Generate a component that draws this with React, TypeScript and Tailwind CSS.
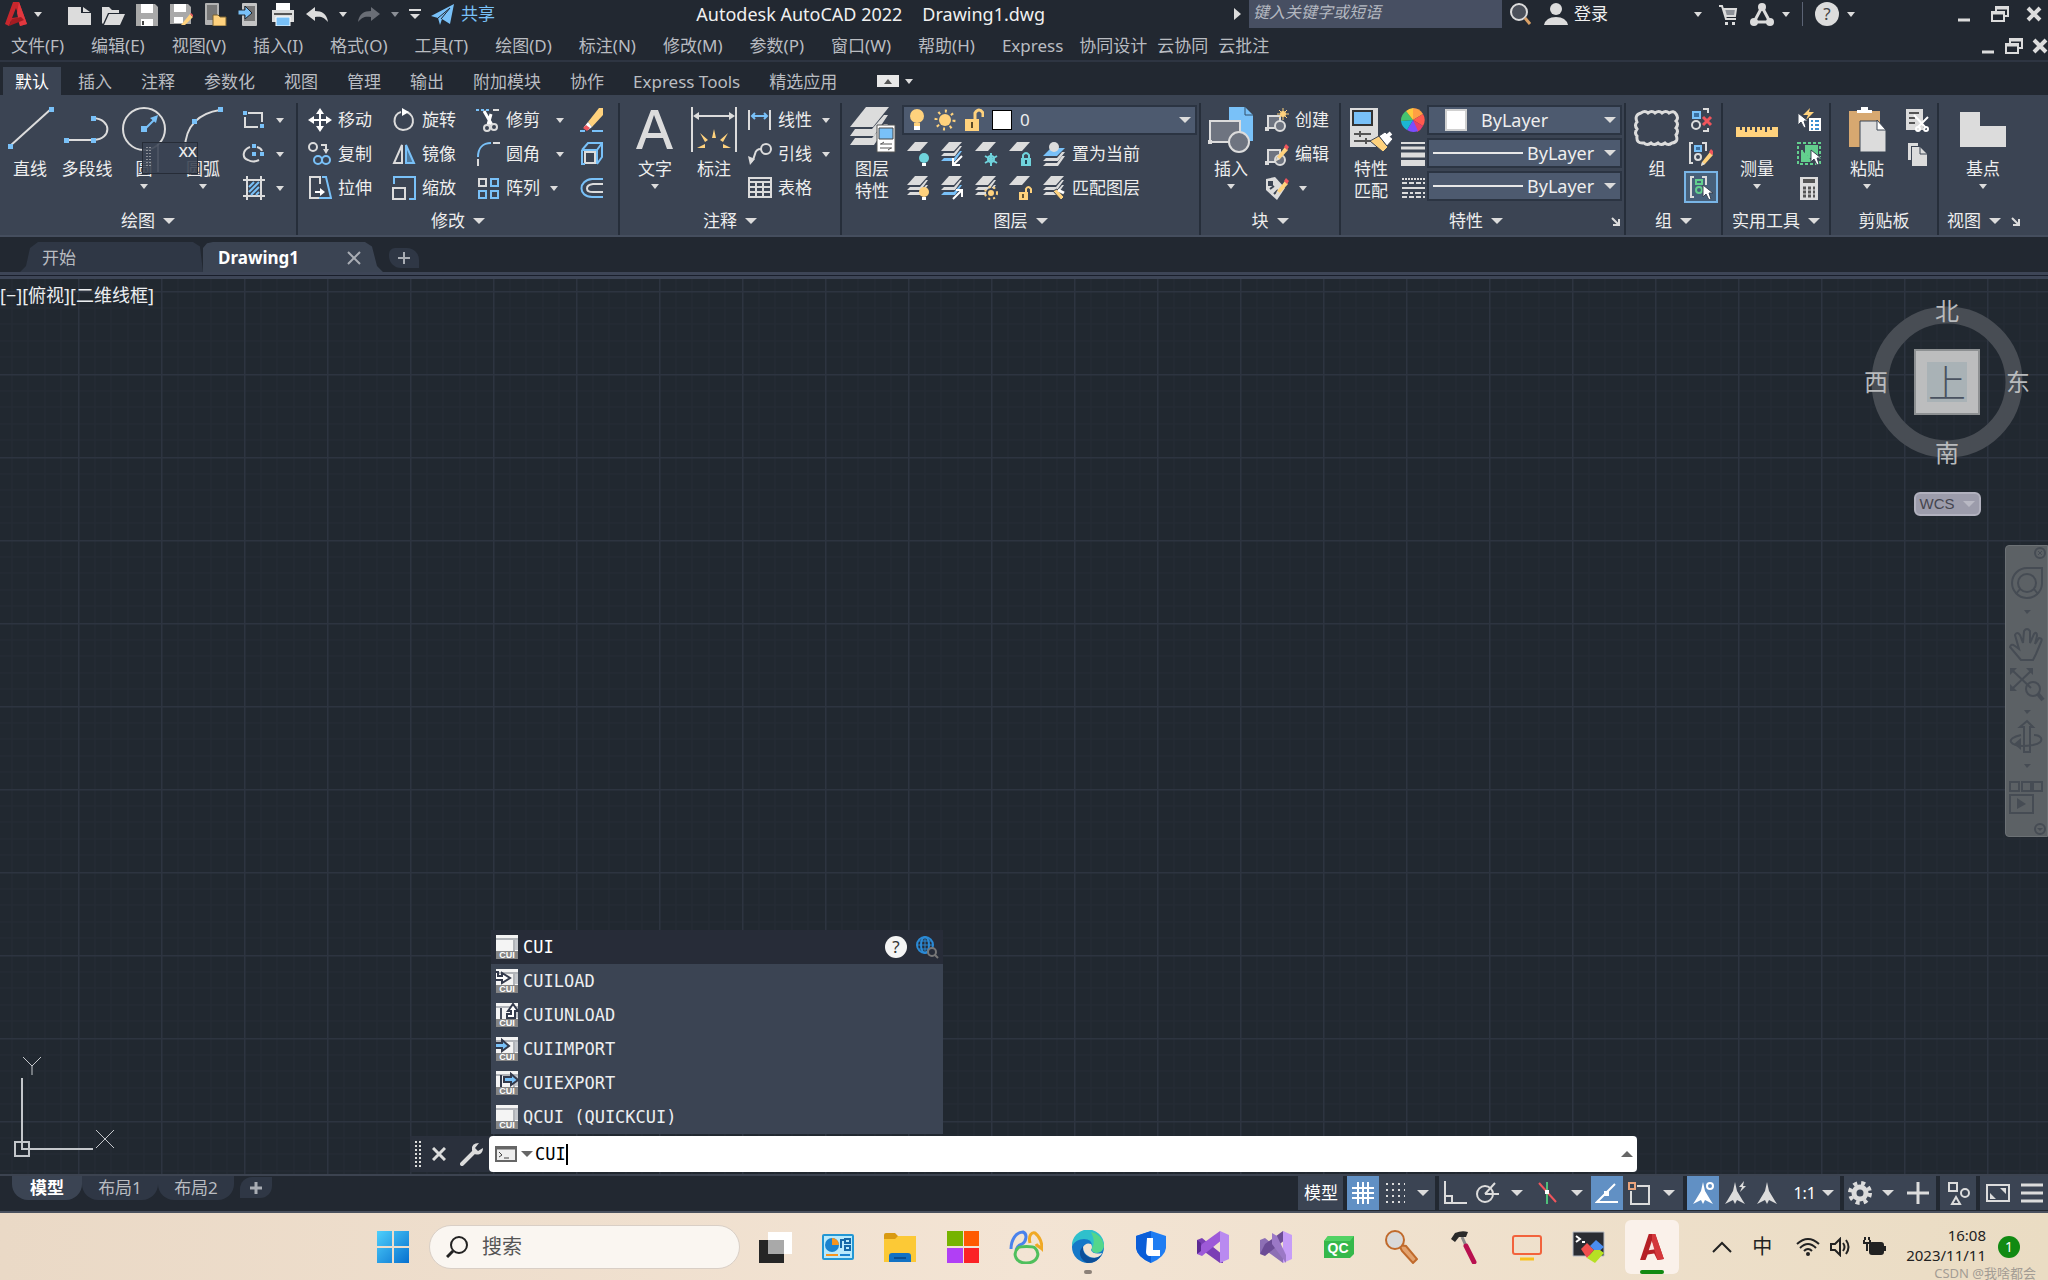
import type { ReactNode } from "react";

const L = "#dcdcdc";
const B = "#79c1f8";
const Y = "#ffd27d";
const C = "#6fd3dc";
const G = "#63cf8e";
const R = "#f0555c";
const P = "#3b4453";

function Svg({ w = 24, h = 24, children }: { w?: number; h?: number; children: ReactNode }) {
  return (
    <svg
      className="shrink-0"
      width={w}
      height={h}
      viewBox={`0 0 ${w} ${h}`}
      fill="none"
      stroke={L}
      strokeWidth={2}
      aria-hidden="true"
    >
      {children}
    </svg>
  );
}

function Caret({ big = false, up = false, color = L }: { big?: boolean; up?: boolean; color?: string }) {
  const w = big ? 12 : 8;
  const h = big ? 6 : 5;
  return (
    <Svg w={w} h={h}>
      <path d={up ? `M0 ${h}H${w}L${w / 2} 0z` : `M0 0H${w}L${w / 2} ${h}z`} fill={color} stroke="none" />
    </Svg>
  );
}

/* shared icon fragments */

function Pencil() {
  return (
    <g stroke="none">
      <path d="M12 15L20 5L23 8L15 17L11 19z" fill={Y} />
      <path d="M19 5L21 2L24 5L22 8z" fill={R} />
      <path d="M11 19L12 15L15 17z" fill={L} />
    </g>
  );
}

function Sheets({ count = 3, blueAt = -1 }: { count?: number; blueAt?: number }) {
  return (
    <g stroke="none">
      {count > 2 && <path d="M1 19L4 16H14L20 9H22L15 19z" fill={blueAt === 2 ? B : L} />}
      {count > 1 && <path d="M1 14L4 11H14L20 4H22L15 14z" fill={blueAt === 1 ? B : L} />}
      <path d="M1 9H14L22 0H9z" fill={L} />
    </g>
  );
}

function Cursor({ x = 11, y = 9 }: { x?: number; y?: number }) {
  return (
    <path
      d={`M${x} ${y}V${y + 12}L${x + 3} ${y + 9}L${x + 6} ${y + 15}L${x + 8} ${y + 14}L${x + 6} ${y + 8}H${x + 10}z`}
      fill="#fff"
      stroke={P}
      strokeWidth={1}
    />
  );
}

function AutocadLogo({ w = 24, h = 26 }: { w?: number; h?: number }) {
  return (
    <svg width={w} height={h} viewBox="0 0 24 26" aria-hidden="true">
      <path d="M9 1H15L23 23L16 25L14 19L7 20L5 25L1 23z" fill="#c8272d" />
      <path d="M12 7L15 16L8 17z" fill="#222831" />
      <path d="M15 1L23 23L16 25L13 12z" fill="#e2383f" />
      <path d="M5 25L8 18L17 16L20 19z" fill="#a41c22" />
    </svg>
  );
}

/* title bar icons */

const iconNew = (
  <Svg>
    <path d="M1 5H14V11H24V23H1z" fill={L} stroke="none" />
    <path d="M16 5L23 10H16z" fill={L} stroke="none" />
  </Svg>
);
const iconOpen = (
  <Svg>
    <path d="M1 21V5H8L11 8H18V11H7L2 22z" fill={L} stroke="none" />
    <path d="M8 12H24L19 23H3z" fill={L} stroke="none" />
  </Svg>
);
const iconSave = (
  <Svg>
    <path d="M1 2H20L23 5V25H1z" fill="#a9a9a9" stroke="none" />
    <path d="M6 2H18V11H6zM6 17H18V24H6z" fill="#fff" stroke="none" />
    <path d="M8 19V23" stroke="#444" />
  </Svg>
);
const iconSaveAs = (
  <Svg>
    <path d="M1 2H19L22 5V22H1z" fill="#a9a9a9" stroke="none" />
    <path d="M5 2H17V10H5zM5 15H14V21H5z" fill="#fff" stroke="none" />
    <path d="M12 23L21 12L24 15L16 23z" fill={Y} stroke="none" />
    <path d="M21 12L22 11L24 13V15z" fill={R} stroke="none" />
  </Svg>
);
const iconWebOpen = (
  <Svg>
    <rect x="2" y="1" width="14" height="22" rx="1" fill="#b3b3b3" stroke="none" />
    <rect x="4" y="3" width="10" height="15" fill="#777" stroke="none" />
    <path d="M10 23V13H15L17 15H23V24H10z" fill={Y} stroke="#7a6232" strokeWidth={1} />
  </Svg>
);
const iconWebSave = (
  <Svg>
    <rect x="5" y="1" width="15" height="23" rx="1" fill="#c4c4c4" stroke="none" />
    <rect x="7" y="4" width="11" height="15" fill="#777" stroke="none" />
    <path d="M1 8H8V4L15 11L8 17V13H1z" fill={B} stroke="#222831" strokeWidth={1} />
  </Svg>
);
const iconPrint = (
  <Svg>
    <path d="M5 1H19V8H5z" fill="#fff" stroke="none" />
    <path d="M1 8H23V20H1z" fill={L} stroke="none" />
    <path d="M3 12H21" stroke="#555" />
    <path d="M5 15H19V24H5z" fill={B} stroke="#fff" strokeWidth={1} />
  </Svg>
);
const iconUndo = (
  <Svg>
    <path d="M1 12L10 5V9C17 9 22 12 23 20C19 15 16 14 10 15V19z" fill={L} stroke="none" />
  </Svg>
);
const iconRedo = (
  <Svg>
    <path d="M23 12L14 5V9C7 9 2 12 1 20C5 15 8 14 14 15V19z" fill="#6a6e76" stroke="none" />
  </Svg>
);
const iconPlane = (
  <Svg>
    <path d="M0 14L23 2L19 22L11 17L9 23L7 16z" fill={B} stroke="none" />
    <path d="M7 16L19 6L10 17" stroke="#222831" strokeWidth={1} />
  </Svg>
);
const iconRestore = (
  <Svg w={20} h={20}>
    <path d="M6 7V3H18V12H14" />
    <path d="M6 4H18" strokeWidth={3} />
    <rect x="2" y="8" width="12" height="9" />
    <path d="M2 9H14" strokeWidth={3} />
  </Svg>
);
const iconClose = (
  <Svg w={16} h={16}>
    <path d="M2 2L14 14M14 2L2 14" strokeWidth={4} />
  </Svg>
);
const iconMin = (
  <Svg w={12} h={20}>
    <path d="M0 16H12" strokeWidth={3} />
  </Svg>
);

/* ribbon, large icons */

const bigLine = (
  <Svg w={50} h={46}>
    <path d="M5 41L46 4" />
    <path d="M3 39h5v5h-5zM44 2h5v5h-5z" fill={B} stroke="none" />
  </Svg>
);
const bigPolyline = (
  <Svg w={48} h={46}>
    <path d="M4 35H30M30 13C49 14 49 34 31 35" />
    <path d="M1 33h5v5h-5zM28 33h5v5h-5zM28 11h5v5h-5z" fill={B} stroke="none" />
  </Svg>
);
const bigCircle = (
  <Svg w={46} h={46}>
    <circle cx="23" cy="24" r="21" />
    <path d="M24 24L34 14" stroke={B} />
    <path d="M37 10L35 18L29 13zM20 21h6v6h-6z" fill={B} stroke="none" />
  </Svg>
);
const bigArc = (
  <Svg w={46} h={46}>
    <path d="M5 44C5 20 20 8 40 5" />
    <path d="M38 2h5v5h-5zM12 14h5v5h-5z" fill={B} stroke="none" />
  </Svg>
);
const bigText = (
  <Svg w={40} h={46}>
    <path d="M1 44L16 5H23L38 44H32L28 33H11L7 44zM13 28H26L19 10z" fill={L} stroke="none" />
  </Svg>
);
const bigDim = (
  <Svg w={48} h={48}>
    <path d="M2 2V47M46 2V47M6 11H42" />
    <path d="M3 11L9 7V15zM45 11L39 7V15z" fill={L} stroke="none" />
    <path
      d="M24 24L26 33H22zM10 28L18 35L15 37zM38 28L30 35L33 37zM7 43L15 39V43zM41 43L33 39V43z"
      fill={Y}
      stroke="none"
    />
  </Svg>
);
const bigLayers = (
  <Svg w={48} h={48}>
    <g fill={L} stroke="none">
      <path d="M2 40L7 33H24L36 19H40L26 40z" />
      <path d="M2 31L7 24H24L36 10H40L26 31z" />
      <path d="M2 22H25L41 2H18z" />
    </g>
    <path d="M29 20H47V47H29z" fill="#fff" stroke="#555" strokeWidth={1} />
    <path d="M31 23H45V34H31z" fill={B} stroke="#444" strokeWidth={1} />
    <path d="M32 39H44M32 43H44M36 37L33 39M40 45L43 43" stroke="#555" strokeWidth={1} />
  </Svg>
);
const bigInsert = (
  <Svg w={48} h={48}>
    <path d="M22 2H38L46 10V36H22z" fill={B} stroke="none" />
    <path d="M38 2V10H46" stroke="#35506b" strokeWidth={1} />
    <path d="M3 16H33V37H3z" fill="#6e7480" stroke={L} />
    <circle cx="32" cy="37" r="10" fill="#6e7480" stroke={L} />
    <path d="M1 35h4v4h-4z" fill={L} stroke="none" />
  </Svg>
);
const bigMatch = (
  <Svg w={48} h={48}>
    <path d="M3 3H31V42H3z" fill={L} stroke="none" />
    <path d="M6 6H25V20H6z" fill={B} stroke="#333" />
    <path d="M7 29H24M7 36H24M13 26V32M19 33V39" stroke="#555" />
    <path d="M23 36L32 31L41 42L36 47z" fill={Y} stroke={P} strokeWidth={1} />
    <path d="M32 31L38 27L46 34L40 41z" fill="#fff" stroke={P} strokeWidth={1} />
    <path d="M38 33L44 28" stroke="#fff" strokeWidth={4} />
  </Svg>
);
const bigGroup = (
  <Svg w={48} h={46}>
    <path
      d="M8 8Q12 5 15 8Q19 5 22 8Q26 5 29 8Q33 5 36 8Q41 5 43 9Q46 13 43 16Q46 19 43 23Q46 26 43 30Q46 37 39 38Q35 41 32 38Q28 41 25 38Q21 41 18 38Q14 41 11 38Q3 39 4 31Q1 28 4 24Q1 20 4 17Q1 10 8 8z"
      strokeWidth={3}
    />
  </Svg>
);
const bigRuler = (
  <Svg w={44} h={46}>
    <path d="M1 22H43V32H1z" fill={Y} stroke="none" />
    <path d="M6 22V25M11 22V27M16 22V25M21 22V27M26 22V25M31 22V27M36 22V25" stroke={P} />
  </Svg>
);
const bigPaste = (
  <Svg w={40} h={48}>
    <path d="M2 6H33V42H2z" fill="#d7a870" stroke="none" />
    <path d="M10 8V5H14V2H21V5H25V8z" fill="#fff" stroke="none" />
    <path d="M13 16H30L39 25V47H13z" fill={L} stroke={P} strokeWidth={1} />
    <path d="M30 15V25H39z" fill="#fff" stroke={P} strokeWidth={1} />
  </Svg>
);
const bigBase = (
  <Svg w={48} h={46}>
    <path d="M1 7H21V21H47V42H1z" fill={L} stroke="none" />
  </Svg>
);

/* ribbon, small icons */

const smRect = (
  <Svg>
    <path d="M6 5H20V14M3 9V19H16" />
    <path d="M1 3h4v4h-4zM18 16h4v4h-4z" fill={B} stroke="none" />
  </Svg>
);
const smEllipse = (
  <Svg>
    <path d="M8 5C0 8 0 16 6 18Q11 21 17 18M15 5Q19 6 20 9" />
    <path d="M10 2h4v4h-4zM10 10h4v4h-4zM18 10h4v4h-4z" fill={B} stroke="none" />
  </Svg>
);
const smHatch = (
  <Svg>
    <path d="M5 0V24M19 0V24M1 4H23M1 20H23" />
    <path d="M7 11L12 6M7 16L17 6M9 19L17 11M14 19L17 16" stroke={B} />
  </Svg>
);
const smMove = (
  <Svg>
    <path d="M12 4V20M4 12H20" stroke="#fff" />
    <path d="M12 0L16 6H8zM12 24L16 18H8zM0 12L6 8V16zM24 12L18 8V16z" fill="#fff" stroke="none" />
  </Svg>
);
const smCopy = (
  <Svg>
    <circle cx="5" cy="5" r="4" />
    <path d="M13 3H18V8" />
    <path d="M15 7H21L18 12z" fill={L} stroke="none" />
    <circle cx="10" cy="18" r="4" stroke={B} />
    <circle cx="18" cy="18" r="4" stroke={B} />
  </Svg>
);
const smStretch = (
  <Svg>
    <path d="M12 8V1H2V22H11" />
    <path d="M14 1H18L23 22H11" stroke={B} />
    <path d="M7 16H13" stroke="#fff" />
    <path d="M12 12L17 16L12 20z" fill="#fff" stroke="none" />
  </Svg>
);
const smRotate = (
  <Svg>
    <path d="M15 4C24 8 23 22 11 22C0 21 0 6 9 4" />
    <path d="M10 0L17 4L10 8z" fill="#fff" stroke="none" />
  </Svg>
);
const smMirror = (
  <Svg>
    <path d="M10 3V21H2z" />
    <path d="M14 3V21H22z" stroke={B} fill="#4e7ba0" />
  </Svg>
);
const smScale = (
  <Svg>
    <path d="M2 8V1H23V23H17" stroke={B} />
    <path d="M1 12H13V23H1z" />
  </Svg>
);
const smTrim = (
  <Svg>
    <path d="M0 2H15" stroke={B} strokeDasharray="3 2" />
    <path d="M8 3L16 17M15 6L12 17" stroke="#fff" strokeWidth={3} />
    <circle cx="11" cy="20" r="3" />
    <circle cx="18" cy="19" r="3" />
    <path d="M17 2H23" />
  </Svg>
);
const smFillet = (
  <Svg>
    <path d="M2 15C2 6 7 1 15 1" stroke={B} />
    <path d="M2 17V24M17 1H24" />
  </Svg>
);
const smArray = (
  <Svg>
    <path d="M3 3h7v7h-7z" />
    <path d="M15 3h7v7h-7zM3 15h7v7h-7zM15 15h7v7h-7z" stroke={B} />
  </Svg>
);
const smErase = (
  <Svg>
    <path d="M8 14L19 0H23V7L12 19z" fill={Y} stroke="none" />
    <path d="M8 14L12 19L8 22L4 19z" fill="#fff" stroke="none" />
    <path d="M6 17L10 20L7 23L3 20z" fill={R} stroke="none" />
    <path d="M0 23H5M12 23H23" stroke={B} />
  </Svg>
);
const smExplode = (
  <Svg>
    <path d="M5 10H15V21H5z" />
    <path d="M2 8L8 1H22V15L17 22M2 8H17V22M17 8L22 1M2 8V22H5" stroke={B} />
  </Svg>
);
const smOffset = (
  <Svg>
    <path d="M23 3H12C-2 4 -2 21 12 21H23" stroke={B} />
    <path d="M23 8H13C5 9 5 16 13 16H23" />
  </Svg>
);
const smLinear = (
  <Svg>
    <path d="M1 2V22M22 2V22" />
    <path d="M4 8H19M7 5L4 8L7 11M16 5L19 8L16 11" stroke={B} />
  </Svg>
);
const smLeader = (
  <Svg>
    <circle cx="18" cy="7" r="5" />
    <path d="M13 7Q8 7 7 12T3 20" />
    <path d="M0 14L7 17L2 23z" fill={L} stroke="none" />
  </Svg>
);
const smTable = (
  <Svg>
    <path d="M1 2H23V21H1z" />
    <path d="M1 6H23M1 11H23M1 16H23M8 6V21M15 6V21" />
  </Svg>
);
const bulb = (color: string) => (
  <g stroke="none">
    <circle cx="18" cy="16" r="5" fill={color} />
    <path d="M16 21H20V24H16z" fill="#fff" />
  </g>
);
const smLayOff = (
  <Svg>
    <Sheets count={1} />
    {bulb(C)}
  </Svg>
);
const smLayOn = (
  <Svg>
    <Sheets />
    {bulb(Y)}
  </Svg>
);
const smLayIso = (
  <Svg>
    <Sheets blueAt={2} />
    <path d="M22 14L14 22M13 16V23H20" stroke="#fff" />
  </Svg>
);
const smLayUniso = (
  <Svg>
    <Sheets blueAt={2} />
    <path d="M13 23L22 14M16 14H22V21" stroke="#fff" />
  </Svg>
);
const smLayFreeze = (
  <Svg>
    <Sheets count={1} />
    <path d="M17 11V24M11 14L23 21M23 14L11 21" stroke={C} />
    <circle cx="17" cy="17" r="3" stroke={C} />
  </Svg>
);
const smLayThaw = (
  <Svg>
    <Sheets />
    <circle cx="17" cy="17" r="4" fill={Y} stroke={P} />
    <circle cx="17" cy="17" r="6" stroke={Y} strokeDasharray="2 3" />
  </Svg>
);
const smLayLock = (
  <Svg>
    <Sheets count={1} />
    <path d="M13 16H23V24H13z" fill={C} stroke="none" />
    <path d="M15 16V13Q18 9 21 13V16" stroke={C} />
    <path d="M18 18V22" stroke="#245" />
  </Svg>
);
const smLayUnlock = (
  <Svg>
    <Sheets count={1} />
    <path d="M11 16H20V24H11z" fill={Y} stroke="none" />
    <path d="M18 16V13Q20 9 23 13V17" stroke={Y} />
    <path d="M15 18V22" stroke="#653" />
  </Svg>
);
const smLayCurrent = (
  <Svg>
    <g stroke="none">
      <path d="M1 24L4 21H15L20 14H23L16 24z" fill={L} />
      <path d="M1 19L4 16H15L20 10H23L16 19z" fill={L} />
      <path d="M1 14H15L23 6H9z" fill={B} />
      <circle cx="12" cy="5" r="5" fill={L} />
    </g>
  </Svg>
);
const smLayMatch = (
  <Svg>
    <Sheets />
    <path d="M11 15L15 13L22 21L19 24z" fill={Y} stroke={P} strokeWidth={1} />
    <path d="M16 14L22 17" stroke="#fff" strokeWidth={3} />
  </Svg>
);
const blockBase = (
  <>
    <path d="M3 8H15V20H3z" fill="#6e7480" />
    <path d="M0 19h4v4h-4z" fill={L} stroke="none" />
    <circle cx="15" cy="18" r="5" fill="#6e7480" />
  </>
);
const smBlockNew = (
  <Svg>
    {blockBase}
    <path d="M18 0V12M12 6H24M14 2L22 10M22 2L14 10" stroke={Y} strokeWidth={1} />
    <circle cx="18" cy="6" r="3" fill={Y} stroke="none" />
  </Svg>
);
const smBlockEdit = (
  <Svg>
    {blockBase}
    <Pencil />
  </Svg>
);
const smTag = (
  <Svg>
    <path d="M1 3L10 1L20 12L12 24L1 14z" fill={L} stroke="none" />
    <path d="M4 6h3v3h-3zM5 13L9 10M9 18L13 14" fill={P} stroke={P} />
    <Pencil />
  </Svg>
);
const smWheel = (
  <Svg>
    <g stroke="none">
      <path d="M12 12L12 0A12 12 0 0 1 22 6z" fill="#ff9f43" />
      <path d="M12 12L22 6A12 12 0 0 1 22 18z" fill="#ff5a4e" />
      <path d="M12 12L22 18A12 12 0 0 1 16 24z" fill="#e83e6b" />
      <path d="M12 12L17 23A12 12 0 0 1 6 22z" fill="#7c4dff" />
      <path d="M12 12L6 22A12 12 0 0 1 0 13z" fill="#1cb5d4" />
      <path d="M12 12L0 13A12 12 0 0 1 5 3z" fill="#45c46f" />
      <path d="M12 12L5 3A12 12 0 0 1 12 0z" fill="#ffc93c" />
    </g>
  </Svg>
);
const smWeights = (
  <Svg>
    <path d="M0 1H24" />
    <path d="M0 6H24" strokeWidth={3} />
    <path d="M0 13H24" strokeWidth={5} />
    <path d="M0 21H24" strokeWidth={6} />
  </Svg>
);
const smTypes = (
  <Svg>
    <path d="M1 3H24" strokeDasharray="2 1" />
    <path d="M1 7H24" strokeDasharray="5 2" />
    <path d="M1 12H24" />
    <path d="M1 17H24" strokeDasharray="6 2 3 2" />
    <path d="M1 21H24" strokeDasharray="5 2" />
  </Svg>
);
const smUngroup = (
  <Svg>
    <path d="M4 4h7v6h-7z" stroke={B} fill="#3a6fa0" />
    <circle cx="7" cy="17" r="4" />
    <path d="M14 1H19V5M19 20V23H14" />
    <path d="M14 9L22 17M22 9L14 17" stroke={R} strokeWidth={3} />
  </Svg>
);
const smGroupEdit = (
  <Svg>
    <path d="M4 1H1V21H4M13 1H17V9" />
    <path d="M6 4h6v5h-6z" stroke={B} fill="#3a6fa0" />
    <circle cx="9" cy="15" r="3" />
    <g transform="translate(1 5)">
      <Pencil />
    </g>
  </Svg>
);
const smGroupSel = (
  <Svg>
    <path d="M5 2H2V22H5M13 2H17V10" />
    <path d="M7 5h6v4h-6z" stroke={G} />
    <circle cx="10" cy="15" r="3" stroke={G} />
    <Cursor x={14} y={10} />
  </Svg>
);
const smQuickSel = (
  <Svg>
    <path d="M13 0L6 7H11L9 12L17 4H12z" fill={Y} stroke="none" />
    <path d="M12 10H24V23H12z" fill="#fff" stroke="none" />
    <path d="M14 13H16M18 13H22M14 17H16M18 17H22M14 21H16M18 21H22" stroke="#3a8fd0" />
    <Cursor x={1} y={5} />
  </Svg>
);
const smSelAll = (
  <Svg>
    <path d="M1 1H23V22H1z" stroke={G} strokeDasharray="3 2" />
    <path d="M9 4H20V15H9zM5 8V19H15" fill={G} stroke={G} />
    <Cursor x={14} y={8} />
  </Svg>
);
const smCalc = (
  <Svg>
    <path d="M3 1H21V24H3z" fill={L} stroke="none" />
    <path d="M6 5H18" stroke="#555" strokeWidth={4} />
    <path d="M6 12H18M6 16H18M6 20H18" stroke="#555" strokeDasharray="3 2" strokeWidth={3} />
  </Svg>
);
const smCut = (
  <Svg>
    <path d="M1 1H18V22H1z" fill={L} stroke="none" />
    <path d="M4 5H14M4 10H10M4 15H10" stroke="#555" />
    <path d="M9 7L21 20M23 9L13 19" stroke="#fff" />
    <circle cx="13" cy="21" r="2" stroke="#fff" />
    <circle cx="21" cy="21" r="2" stroke="#fff" />
  </Svg>
);
const smCopyClip = (
  <Svg>
    <path d="M3 1H13V4H6V18H3z" fill={L} stroke="none" />
    <path d="M7 5H15L22 12V24H7z" fill={L} stroke="none" />
    <path d="M15 5V12H22" stroke={P} strokeWidth={1} />
  </Svg>
);

/* ribbon building blocks */

function BigButton({
  icon,
  label,
  second,
  caret,
  width,
}: {
  icon: ReactNode;
  label: string;
  second?: string;
  caret?: boolean;
  width: string;
}) {
  return (
    <button className={`flex flex-col items-center pt-0.5 leading-[22px] ${width}`}>
      <span className="flex h-[53px] items-start justify-center">{icon}</span>
      <span className="whitespace-nowrap">{label}</span>
      {second && <span className="whitespace-nowrap">{second}</span>}
      {caret && (
        <span className="flex h-3 items-center">
          <Caret />
        </span>
      )}
    </button>
  );
}

function Small({
  icon,
  label,
  caret,
  tight,
}: {
  icon: ReactNode;
  label?: string;
  caret?: boolean;
  tight?: boolean;
}) {
  return (
    <button className="flex h-[34px] items-center gap-1.5 whitespace-nowrap" aria-label={label ?? "工具"}>
      {icon}
      {label}
      {caret && (
        <span className={label && !tight ? "ml-2.5" : "ml-1"}>
          <Caret />
        </span>
      )}
    </button>
  );
}

function Panel({
  title,
  grow,
  caret = true,
  launcher = false,
  children,
}: {
  title: string;
  grow: string;
  caret?: boolean;
  launcher?: boolean;
  children: ReactNode;
}) {
  return (
    <section className={`flex flex-col border-r-2 border-[#262e3a] ${grow}`}>
      <div className="flex h-[106px] items-start">{children}</div>
      <div className="flex h-7 items-center">
        <span className="flex flex-1 items-center justify-center gap-2 whitespace-nowrap">
          {title}
          {caret && <Caret big />}
        </span>
        {launcher && (
          <button className="mr-1" aria-label={`${title}设置`}>
            <Svg w={9} h={9}>
              <path d="M1 1L7 7M8 2V8H2" />
            </Svg>
          </button>
        )}
      </div>
    </section>
  );
}

function PropertySelect({ label, lead }: { label: string; lead: ReactNode }) {
  return (
    <div className="flex h-[30px] items-center border-2 border-[#2b3442] bg-[#4d5a6f] pr-1">
      {lead}
      <select aria-label={label} className="min-w-0 flex-1 appearance-none bg-transparent text-[18px] leading-6">
        <option>ByLayer</option>
      </select>
      <Caret big />
    </div>
  );
}

const menus = [
  "文件(F)", "编辑(E)", "视图(V)", "插入(I)", "格式(O)", "工具(T)", "绘图(D)", "标注(N)",
  "修改(M)", "参数(P)", "窗口(W)", "帮助(H)", "Express",
];
const cloudMenus = ["协同设计", "云协同", "云批注"];
const ribbonTabs = [
  "默认", "插入", "注释", "参数化", "视图", "管理", "输出", "附加模块", "协作", "Express Tools", "精选应用",
];

function TitleBar() {
  return (
    <header className="relative flex h-7 items-center text-[17px] leading-6 text-[#f0f0f0]">
      <button className="flex items-center gap-1.5 pl-1" aria-label="应用程序菜单">
        <AutocadLogo />
        <Caret />
      </button>
      <div className="ml-[25px] flex items-center gap-2.5">
        {[iconNew, iconOpen, iconSave, iconSaveAs, iconWebOpen, iconWebSave, iconPrint].map((icon, i) => (
          <button key={i} aria-label={["新建", "打开", "保存", "另存为", "从 Web 打开", "保存到 Web", "打印"][i]}>
            {icon}
          </button>
        ))}
        <button className="flex items-center gap-2.5" aria-label="放弃">
          {iconUndo}
          <Caret />
        </button>
        <button className="flex items-center gap-2.5" aria-label="重做">
          {iconRedo}
          <Caret color="#8b8f96" />
        </button>
        <button aria-label="自定义快速访问工具栏">
          <Svg w={12} h={12}>
            <path d="M0 2H12" />
            <path d="M1 6H11L6 11z" fill={L} stroke="none" />
          </Svg>
        </button>
        <button className="flex items-center gap-1.5 text-[#79c1f8]">
          {iconPlane}
          共享
        </button>
      </div>
      <h1 className="absolute left-[34%] flex gap-5 text-[18px] whitespace-nowrap">
        <span>Autodesk AutoCAD 2022</span>
        <span>Drawing1.dwg</span>
      </h1>
      <div className="ml-auto flex h-full items-center">
        <Svg w={7} h={12}>
          <path d="M0 0V12L7 6z" fill={L} stroke="none" />
        </Svg>
        <input
          aria-label="搜索"
          placeholder="键入关键字或短语"
          className="ml-2 h-full w-[253px] bg-[#474f62] px-1 pb-1 text-[16px] italic placeholder:text-[#b4b8c0]"
        />
        <button className="ml-2" aria-label="搜索帮助">
          <Svg w={22}>
            <circle cx="9" cy="10" r="8" fill="#4b505a" />
            <path d="M15 16L20 22" stroke="#d9a066" strokeWidth={3} />
          </Svg>
        </button>
        <button className="ml-3 flex items-center gap-1.5">
          <Svg>
            <circle cx="12" cy="7" r="6" fill={L} stroke="none" />
            <path d="M0 23Q2 15 12 15T24 23z" fill={L} stroke="none" />
          </Svg>
          登录
        </button>
        <button className="ml-[86px]" aria-label="帐户">
          <Caret />
        </button>
        <button className="ml-4" aria-label="应用商店">
          <Svg w={20}>
            <path d="M1 4H4L8 17H18" />
            <path d="M6 7H18L17 14H8z" fill="#8d9198" />
            <path d="M7 20h3v3h-3zM14 20h3v3h-3z" fill={L} stroke="none" />
          </Svg>
        </button>
        <button className="ml-3 flex items-center gap-2" aria-label="联机">
          <Svg>
            <path d="M12 5L4 20H20z" strokeWidth={3} />
            <g fill={L} stroke="none">
              <circle cx="12" cy="5" r="4" />
              <circle cx="4" cy="20" r="4" />
              <circle cx="20" cy="20" r="4" />
            </g>
          </Svg>
          <Caret />
        </button>
        <span className="mx-3 h-6 w-px bg-[#5b6374]" />
        <button className="flex items-center gap-2" aria-label="帮助">
          <span className="flex size-6 items-center justify-center rounded-full bg-[#dcdcdc] text-[#444]">?</span>
          <Caret />
        </button>
        <button className="ml-[103px]" aria-label="最小化">{iconMin}</button>
        <button className="ml-5" aria-label="还原">{iconRestore}</button>
        <button className="mr-1.5 ml-4" aria-label="关闭">{iconClose}</button>
      </div>
    </header>
  );
}

function MenuBar() {
  return (
    <nav className="flex h-[34px] items-center border-b-2 border-[#2e3542] pt-1 pl-[11px] text-[17px] leading-6 text-[#b9bcc1]">
      <div className="flex gap-[27px] whitespace-nowrap">
        {menus.map((m) => (
          <button key={m}>{m}</button>
        ))}
      </div>
      <div className="ml-4 flex gap-2.5 whitespace-nowrap">
        {cloudMenus.map((m) => (
          <button key={m}>{m}</button>
        ))}
      </div>
      <div className="ml-auto flex items-center">
        <button aria-label="最小化图形">{iconMin}</button>
        <button className="ml-2.5" aria-label="还原图形">{iconRestore}</button>
        <button className="ml-2" aria-label="关闭图形">{iconClose}</button>
      </div>
    </nav>
  );
}

function RibbonTabs() {
  return (
    <div className="flex h-[33px] items-end pl-[3px] text-[17px] leading-6 text-[#b9bcc1]">
      <div className="flex gap-[5px]">
        {ribbonTabs.map((t, i) => (
          <button
            key={t}
            className={`h-7 px-3 pt-0.5 whitespace-nowrap ${i === 0 ? "bg-[#3b4453] text-white" : ""}`}
          >
            {t}
          </button>
        ))}
      </div>
      <button className="ml-7 flex h-7 items-center gap-1.5" aria-label="最小化功能区">
        <span className="flex h-3 w-[22px] items-center justify-center bg-[#e8e8e8]">
          <Caret up color="#555" />
        </span>
        <Caret />
      </button>
    </div>
  );
}

function Ribbon() {
  return (
    <div className="flex h-[142px] border-b-2 border-[#454e5e] bg-[#3b4453] pt-2 text-[17px] leading-6 text-[#eeeeee]">
      <Panel title="绘图" grow="flex-[296] relative">
        <div className="flex pl-1">
          <BigButton width="w-[52px]" icon={bigLine} label="直线" />
          <BigButton width="w-[62px]" icon={bigPolyline} label="多段线" />
          <BigButton width="w-[52px]" icon={bigCircle} label="圆" caret />
          <BigButton width="w-[66px]" icon={bigArc} label="圆弧" caret />
        </div>
        <div className="flex flex-col pl-1.5">
          <Small icon={smRect} caret />
          <Small icon={smEllipse} caret />
          <Small icon={smHatch} caret />
        </div>
        <div className="absolute top-[39px] left-[142px] flex h-8 w-14 items-start border border-[#262c37] bg-[#3b4453e6]">
          <Svg w={16} h={30}>
            <path d="M4 4V24M7 4V24" strokeDasharray="1 2" strokeWidth={1} />
            <path d="M15 1V29" stroke="#5a6270" strokeWidth={1} />
          </Svg>
          <span className="ml-auto text-[15px] leading-4 font-medium">XX</span>
        </div>
      </Panel>

      <Panel title="修改" grow="flex-[320]">
        <div className="flex gap-5 pl-2.5">
          <div>
            <Small icon={smMove} label="移动" />
            <Small icon={smCopy} label="复制" />
            <Small icon={smStretch} label="拉伸" />
          </div>
          <div>
            <Small icon={smRotate} label="旋转" />
            <Small icon={smMirror} label="镜像" />
            <Small icon={smScale} label="缩放" />
          </div>
          <div>
            <Small icon={smTrim} label="修剪" caret />
            <Small icon={smFillet} label="圆角" caret />
            <Small icon={smArray} label="阵列" caret tight />
          </div>
          <div className="-ml-1">
            <Small icon={smErase} />
            <Small icon={smExplode} />
            <Small icon={smOffset} />
          </div>
        </div>
      </Panel>

      <Panel title="注释" grow="flex-[220]">
        <div className="flex pl-1.5">
          <BigButton width="w-[58px]" icon={bigText} label="文字" caret />
          <BigButton width="w-[60px]" icon={bigDim} label="标注" />
        </div>
        <div className="pl-1">
          <Small icon={smLinear} label="线性" caret tight />
          <Small icon={smLeader} label="引线" caret tight />
          <Small icon={smTable} label="表格" />
        </div>
      </Panel>

      <Panel title="图层" grow="flex-[357]">
        <div className="pl-1">
          <BigButton width="w-[52px]" icon={bigLayers} label="图层" second="特性" />
        </div>
        <div className="flex flex-1 flex-col pt-0.5 pr-0.5 pl-1">
          <div className="flex h-[30px] items-center gap-2 border-2 border-[#2b3442] bg-[#4d5a6f] pr-1 pl-1">
            <Svg w={18}>
              <circle cx="9" cy="8" r="7" fill={Y} stroke="none" />
              <path d="M6 15H12V18H6z" fill={Y} stroke="none" />
              <path d="M6 18H12V22H6z" fill="#fff" stroke="none" />
            </Svg>
            <Svg w={22}>
              <circle cx="11" cy="12" r="6" fill={Y} stroke="none" />
              <circle cx="11" cy="12" r="9" stroke={Y} strokeWidth={3} strokeDasharray="2 5" />
            </Svg>
            <Svg w={20}>
              <path d="M1 11H15V23H1z" fill={Y} stroke="none" />
              <path d="M11 11V5Q15 -1 19 5V9" stroke={Y} strokeWidth={3} />
              <path d="M8 14V20" stroke="#5b4a28" />
            </Svg>
            <span className="h-5 w-5 border border-black bg-white" />
            <select aria-label="图层" className="min-w-0 flex-1 appearance-none bg-transparent leading-6">
              <option>0</option>
            </select>
            <Caret big />
          </div>
          <div className="mt-0.5 flex gap-2.5 pl-1">
            {[smLayOff, smLayIso, smLayFreeze, smLayLock].map((icon, i) => (
              <Small key={i} icon={icon} />
            ))}
            <Small icon={smLayCurrent} label="置为当前" />
          </div>
          <div className="flex gap-2.5 pl-1">
            {[smLayOn, smLayUniso, smLayThaw, smLayUnlock].map((icon, i) => (
              <Small key={i} icon={icon} />
            ))}
            <Small icon={smLayMatch} label="匹配图层" />
          </div>
        </div>
      </Panel>

      <Panel title="块" grow="flex-[138]">
        <div className="pl-0.5">
          <BigButton width="w-[56px]" icon={bigInsert} label="插入" caret />
        </div>
        <div className="pl-1.5">
          <Small icon={smBlockNew} label="创建" />
          <Small icon={smBlockEdit} label="编辑" />
          <Small icon={smTag} caret />
        </div>
      </Panel>

      <Panel title="特性" grow="flex-[283]" launcher>
        <div className="pl-1">
          <BigButton width="w-[52px]" icon={bigMatch} label="特性" second="匹配" />
        </div>
        <div className="pl-1">
          <Small icon={smWheel} />
          <Small icon={smWeights} />
          <Small icon={smTypes} />
        </div>
        <div className="flex flex-1 flex-col gap-[3px] pt-0.5 pr-0.5 pl-0.5">
          <PropertySelect
            label="颜色"
            lead={<span className="mr-3.5 ml-4 h-[22px] w-[22px] border-2 border-[#d0d0d0] bg-white" />}
          />
          <PropertySelect label="线宽" lead={<span className="mr-1 ml-1 h-0.5 w-[90px] bg-[#e8e8e8]" />} />
          <PropertySelect label="线型" lead={<span className="mr-1 ml-1 h-0.5 w-[90px] bg-[#e8e8e8]" />} />
        </div>
      </Panel>

      <Panel title="组" grow="flex-[95]">
        <div className="pl-1">
          <BigButton width="w-[54px]" icon={bigGroup} label="组" />
        </div>
        <div className="flex flex-col items-center">
          <Small icon={smUngroup} />
          <Small icon={smGroupEdit} />
          <button
            aria-label="组选择"
            aria-pressed="true"
            className="flex h-8 w-[34px] items-center justify-center border-2 border-[#79b5e6] bg-[#47607a]"
          >
            {smGroupSel}
          </button>
        </div>
      </Panel>

      <Panel title="实用工具" grow="flex-[106]">
        <div className="pl-1.5">
          <BigButton width="w-[56px]" icon={bigRuler} label="测量" caret />
        </div>
        <div className="pl-3">
          <Small icon={smQuickSel} />
          <Small icon={smSelAll} />
          <Small icon={smCalc} />
        </div>
      </Panel>

      <Panel title="剪贴板" grow="flex-[106]" caret={false}>
        <div className="pl-2">
          <BigButton width="w-[56px]" icon={bigPaste} label="粘贴" caret />
        </div>
        <div className="pl-2.5">
          <Small icon={smCut} />
          <Small icon={smCopyClip} />
        </div>
      </Panel>

      <section className="flex flex-[109] flex-col">
        <div className="h-[106px] pl-4">
          <BigButton width="w-[56px]" icon={bigBase} label="基点" caret />
        </div>
        <div className="flex h-7 items-center pl-2 whitespace-nowrap">
          视图
          <span className="mr-2.5 ml-2">
            <Caret big />
          </span>
          <Svg w={9} h={9}>
            <path d="M1 1L7 7M8 2V8H2" />
          </Svg>
        </div>
      </section>
    </div>
  );
}

function DrawingTabs() {
  return (
    <div className="flex h-[35px] items-end pl-5 text-[17px] leading-6">
      <button className="h-[30px] w-[183px] bg-[#2f3745] pt-0.5 pl-[22px] text-left text-[#b9bcc1] [clip-path:polygon(0_100%,6px_80%,10px_20%,18px_0,calc(100%-10px)_0,calc(100%-3px)_15%,100%_100%)]">
        开始
      </button>
      <div className="flex h-[30px] w-[180px] items-center justify-between bg-[#3b4453] pt-0.5 pr-[22px] pl-[15px] font-bold text-white [clip-path:polygon(0_100%,0_20%,4px_4%,10px_0,calc(100%-18px)_0,calc(100%-11px)_15%,calc(100%-6px)_80%,100%_100%)]">
        Drawing1
        <button aria-label="关闭 Drawing1">
          <Svg w={14} h={14}>
            <path d="M1 1L13 13M13 1L1 13" stroke="#a9adb4" />
          </Svg>
        </button>
      </div>
      <button
        aria-label="新图形"
        className="mb-1 ml-1.5 flex h-5 w-[30px] items-center justify-center rounded-tl-md rounded-tr-xl rounded-bl-xl bg-[#2f3745]"
      >
        <Svg w={12} h={12}>
          <path d="M6 0V12M0 6H12" stroke="#a9adb4" />
        </Svg>
      </button>
    </div>
  );
}

function CuiIcon({ kind }: { kind: string }) {
  return (
    <svg className="shrink-0" width="24" height="24" viewBox="0 0 24 24" aria-hidden="true">
      <path d="M1 0H23V16H1z" fill="#f4f4f4" />
      <path d="M1 4H23M19 5V16" stroke="#6f747e" />
      <path d="M20 5H23V15H20z" fill="#c3c6cb" />
      <path d="M1 16H23V24H1z" fill="#858585" />
      <text x="12" y="23" fontSize="9" fontWeight="700" fontFamily="Liberation Sans, sans-serif" fill="#fff" textAnchor="middle">
        CUI
      </text>
      {kind === "load" && <path d="M0 3H3V7H7V4L15 9L7 14V11H0z" fill="#fff" stroke="#333a4c" strokeWidth="2" />}
      {kind === "unload" && (
        <>
          <path d="M6 5V16" stroke="#444b5a" strokeWidth="2" />
          <path d="M12 15V11H16V8H13L18 1L23 8H20V15z" fill="#fff" stroke="#333a4c" strokeWidth="2" />
        </>
      )}
      {kind === "import" && (
        <path d="M0 6H7V3L14 9L7 14V11H0z" fill="#79c1f8" stroke="#333a4c" strokeWidth="2" />
      )}
      {kind === "export" && (
        <>
          <path d="M6 4V16" stroke="#333a4c" strokeWidth="2" />
          <path d="M9 6H16V3L23 9L16 14V11H9z" fill="#79c1f8" stroke="#333a4c" strokeWidth="2" />
        </>
      )}
    </svg>
  );
}

const suggestions = [
  { name: "CUILOAD", kind: "load" },
  { name: "CUIUNLOAD", kind: "unload" },
  { name: "CUIIMPORT", kind: "import" },
  { name: "CUIEXPORT", kind: "export" },
  { name: "QCUI (QUICKCUI)", kind: "plain" },
];

function CommandLine() {
  return (
    <div className="absolute right-[411px] bottom-0.5 left-[410px] font-['DejaVu_Sans_Mono','Liberation_Mono',monospace] text-[17px] leading-6">
      <div className="mb-0.5 ml-[81px] w-[452px] text-[#eceef0]">
        <div className="flex h-[34px] items-center gap-1 bg-[#272c38] px-1 text-white">
          <CuiIcon kind="plain" />
          CUI
          <button
            aria-label="帮助"
            className="mr-1 ml-auto flex size-[22px] items-center justify-center rounded-full bg-[#f4f4f4] font-['Noto_Sans',sans-serif] text-[#333]"
          >
            ?
          </button>
          <button aria-label="在 Internet 上搜索">
            <Svg>
              <circle cx="10" cy="10" r="8" stroke="#2b8ad6" />
              <ellipse cx="10" cy="10" rx="4" ry="8" stroke="#2b8ad6" />
              <path d="M10 2V18M2 10H18M4 6H16M4 14H16" stroke="#2b8ad6" strokeWidth={1} />
              <circle cx="17" cy="17" r="4" fill="#272c38" stroke="#777" />
              <path d="M20 20L23 23" stroke="#777" />
            </Svg>
          </button>
        </div>
        <ul className="bg-[#3b4453]">
          {suggestions.map((s) => (
            <li key={s.name}>
              <button className="flex h-[34px] w-full items-center gap-1 px-1">
                <CuiIcon kind={s.kind} />
                {s.name}
              </button>
            </li>
          ))}
        </ul>
      </div>
      <div className="flex h-9 bg-[#2a303c]">
        <div className="flex w-[79px] items-center gap-2.5 pl-1">
          <Svg w={8} h={26}>
            <path d="M2 0V26M6 0V26" strokeDasharray="2 2" />
          </Svg>
          <button aria-label="关闭命令行">
            <Svg w={14} h={14}>
              <path d="M1 1L13 13M13 1L1 13" strokeWidth={3} />
            </Svg>
          </button>
          <button className="ml-1" aria-label="自定义">
            <Svg>
              <path d="M2 22L14 10" strokeWidth={4} strokeLinecap="round" />
              <path d="M19 1Q11 1 12 8Q13 14 20 12Q23 10 23 6L18 9L15 6z" fill={L} stroke="none" />
            </Svg>
          </button>
        </div>
        <label className="flex flex-1 items-center rounded-sm bg-white pr-1 pl-1.5 text-black">
          <Svg w={22} h={16}>
            <path d="M1 1H21V15H1z" stroke="#666" fill="#eee" />
            <path d="M1 2H21" stroke="#666" strokeWidth={3} />
            <path d="M4 6L7 9L4 11M9 12H14" stroke="#444" strokeWidth={1} />
          </Svg>
          <span className="mr-0.5 ml-1">
            <Caret big color="#666" />
          </span>
          <input aria-label="命令" defaultValue="CUI" className="field-sizing-content outline-none" />
          <span className="h-[21px] w-0.5 bg-black" />
          <span className="ml-auto">
            <Caret big up color="#666" />
          </span>
        </label>
      </div>
    </div>
  );
}

function ViewCube() {
  return (
    <div className="absolute top-5 right-[18px] flex w-[166px] flex-col items-center text-[24px] leading-6 text-[#b9bbbd]">
      <svg className="absolute top-[7px]" width="152" height="152" viewBox="0 0 152 152" fill="none" aria-hidden="true">
        <circle cx="76" cy="76" r="67" stroke="#484d54" strokeWidth="17" />
      </svg>
      <button className="relative">北</button>
      <div className="relative mt-[26px] flex w-full items-center justify-between">
        <button>西</button>
        <button className="flex size-[66px] items-center justify-center border-2 border-[#8d9092] bg-[#bcbdbe]">
          <span className="flex size-10 items-center justify-center bg-[#a9b2b6] text-[38px] leading-10 font-light text-[#4a5260]">
            上
          </span>
        </button>
        <button>东</button>
      </div>
      <button className="relative mt-[26px]">南</button>
      <button className="mt-[27px] flex h-6 w-[67px] items-center justify-between rounded-md border-2 border-[#b1b1be] bg-[#9c9cab] px-1 font-['Liberation_Sans',sans-serif] text-[15px] leading-4 text-[#45454f]">
        WCS
        <Caret big color="#b9b9c4" />
      </button>
    </div>
  );
}

function NavBar() {
  const s = "#464c54";
  return (
    <div className="absolute top-[266px] right-0 rounded-l-sm border border-[#6c7175] bg-[#5c6165]">
      <svg width="41" height="290" viewBox="0 0 41 290" fill="none" stroke={s} strokeWidth="2" aria-hidden="true">
        <circle cx="34" cy="7" r="5" />
        <path d="M32 5L36 9M36 5L32 9" strokeWidth="1" />
        <path d="M21 22H36V38A15 15 0 1 1 21 22z" />
        <circle cx="21" cy="37" r="9" />
        <path d="M14 43L10 48M28 43L32 48" />
        <path d="M18 64H25L21 68z" fill={s} stroke="none" />
        <path d="M15 114L4 101Q5 97 9 100L13 103L9 89Q11 85 14 89L17 97L18 85Q21 81 24 85V97L28 88Q31 85 31 90L29 98L33 92Q37 92 35 96L30 108L27 114z" />
        <path d="M6 124L25 142M26 124L6 143" />
        <path d="M4 122H11L4 129zM27 122H20L27 129zM4 145V138L11 145z" fill={s} stroke="none" />
        <circle cx="27" cy="143" r="7" />
        <path d="M32 148L37 154" strokeWidth="4" />
        <path d="M18 164H25L21 168z" fill={s} stroke="none" />
        <path d="M18 206V181H14L21 175L27 181H24V206z" />
        <path d="M15 189Q3 192 5 196Q9 202 27 199Q37 197 35 192Q33 189 28 189" />
        <path d="M15 192V204L8 198z" fill={s} stroke="none" />
        <path d="M18 218H25L21 222z" fill={s} stroke="none" />
        <path d="M4 236h9v9h-9zM16 236h9v9h-9zM27 236h9v9h-9zM4 249H27V267H4z" />
        <path d="M11 252V263L20 258z" fill={s} stroke="none" />
        <circle cx="34" cy="283" r="5" />
        <path d="M31 282H37L34 285z" fill={s} stroke="none" />
      </svg>
    </div>
  );
}

function Canvas() {
  return (
    <main className="relative flex-1 overflow-hidden border-b-2 border-[#3c4350] bg-[#212830]">
      <svg className="absolute inset-0 h-full w-full" aria-hidden="true">
        <defs>
          <pattern id="grid" width="83" height="83" patternUnits="userSpaceOnUse" x="78" y="12">
            <path d="M17 0V83M33 0V83M50 0V83M66 0V83M0 17H83M0 33H83M0 50H83M0 66H83" stroke="#252c35" />
            <path d="M0 0V83M0 0H83" stroke="#2d3440" strokeWidth="3" />
          </pattern>
        </defs>
        <rect width="100%" height="100%" fill="url(#grid)" />
      </svg>
      <p className="relative pt-1 text-[18px] leading-6 text-[#eceef0]">[−][俯视][二维线框]</p>
      <ViewCube />
      <NavBar />
      <svg
        className="absolute bottom-[17px] left-3.5"
        width="102"
        height="102"
        viewBox="0 0 102 102"
        fill="none"
        stroke="#c4c7cb"
        strokeWidth="2"
        aria-hidden="true"
      >
        <path d="M8 23V94H79M1 87H15V101H1z" />
        <path d="M9 2L18 11L27 2M18 11V20M82 75L100 93M100 75L82 93" strokeWidth="1" />
      </svg>
      <CommandLine />
    </main>
  );
}

/* status bar */

function StatusGroup({ children }: { children: ReactNode }) {
  return <div className="flex h-[34px] items-center bg-[#3b4453]">{children}</div>;
}

function Toggle({
  label,
  on = false,
  width = "w-8",
  children,
}: {
  label: string;
  on?: boolean;
  width?: string;
  children: ReactNode;
}) {
  return (
    <button
      aria-label={label}
      aria-pressed={on}
      className={`flex h-full items-center justify-center ${width} ${on ? "bg-[#6190c4]" : ""}`}
    >
      {children}
    </button>
  );
}

const star = "M12 1L14 10L20 20L22 23L14 19L12 23L10 19L2 23L4 20L10 10z";

function StatusBar() {
  return (
    <footer className="flex h-[37px] items-start justify-between border-b-2 border-[#4a515e] text-[17px] leading-6 text-[#b9bcc1]">
      <div className="flex items-start pl-3">
        <button className="h-6 w-[70px] rounded-b-2xl bg-[#3b4453] font-bold text-white">模型</button>
        <button className="h-6 w-[76px] rounded-b-2xl bg-[#2f3745]">布局1</button>
        <button className="h-6 w-[76px] rounded-b-2xl bg-[#2f3745]">布局2</button>
        <button
          aria-label="新建布局"
          className="mt-px ml-1.5 flex h-[21px] w-8 items-center justify-center rounded-tl-xl rounded-br-xl bg-[#2f3745]"
        >
          <Svg w={12} h={12}>
            <path d="M6 0V12M0 6H12" stroke="#a9adb4" strokeWidth={3} />
          </Svg>
        </button>
      </div>
      <div className="flex gap-1 text-white">
        <StatusGroup>
          <button className="w-[45px] text-center">模型</button>
        </StatusGroup>
        <StatusGroup>
          <Toggle label="栅格" on>
            <Svg>
              <path d="M7 1V23M12 1V23M17 1V23M1 7H23M1 12H23M1 17H23" stroke="#fff" />
            </Svg>
          </Toggle>
          <Toggle label="捕捉">
            <Svg>
              <path d="M3 3H22M3 9H22M3 15H22M3 21H22" strokeDasharray="2 4" />
            </Svg>
          </Toggle>
          <span className="w-6 pl-1.5">
            <Caret big />
          </span>
        </StatusGroup>
        <StatusGroup>
          <Toggle label="正交">
            <Svg>
              <path d="M2 0V22H24M2 15H9V22" />
            </Svg>
          </Toggle>
          <Toggle label="极轴">
            <Svg>
              <circle cx="10" cy="13" r="8" />
              <path d="M10 13H24M10 13L20 2" />
            </Svg>
          </Toggle>
          <span className="w-7 px-2">
            <Caret big />
          </span>
          <Toggle label="等轴测草图">
            <Svg>
              <path d="M12 1V23" stroke="#4fbf7b" />
              <path d="M4 2L21 21" stroke={R} />
              <path d="M10 9h4v4h-4z" fill="#fff" stroke="none" />
            </Svg>
          </Toggle>
          <span className="w-7 px-2">
            <Caret big />
          </span>
          <Toggle label="对象捕捉追踪" on>
            <Svg>
              <path d="M20 3L2 21H23" stroke="#fff" />
              <path d="M9 10h5v5h-5z" fill="#fff" stroke="none" />
            </Svg>
          </Toggle>
          <Toggle label="对象捕捉">
            <Svg>
              <path d="M10 5H22V23H4V10" />
              <path d="M2 2h6v6h-6z" stroke="#e9a37c" />
            </Svg>
          </Toggle>
          <span className="w-7 px-2">
            <Caret big />
          </span>
        </StatusGroup>
        <StatusGroup>
          <Toggle label="注释可见性" on>
            <Svg>
              <path d={star} fill="#fff" stroke="none" />
              <circle cx="19" cy="5" r="3" stroke="#fff" />
            </Svg>
          </Toggle>
          <Toggle label="自动缩放">
            <Svg>
              <path d={star} fill={L} stroke="none" />
              <path d="M21 0L16 6H19L17 11L23 5H20z" fill={L} stroke="none" />
            </Svg>
          </Toggle>
          <Toggle label="注释比例">
            <Svg>
              <path d={star} fill={L} stroke="none" />
            </Svg>
          </Toggle>
          <button className="flex items-center gap-1.5 pr-1.5 pl-2.5 text-[16px]">
            1:1
            <Caret big />
          </button>
        </StatusGroup>
        <StatusGroup>
          <Toggle label="切换工作空间">
            <Svg>
              <circle cx="12" cy="12" r="6" strokeWidth={5} />
              <circle cx="12" cy="12" r="10" strokeWidth={4} strokeDasharray="4 4" />
            </Svg>
          </Toggle>
          <span className="w-6 pl-1.5">
            <Caret big />
          </span>
          <Toggle label="注释监视器" width="w-9">
            <Svg>
              <path d="M12 1V23M1 12H23" strokeWidth={3} />
            </Svg>
          </Toggle>
        </StatusGroup>
        <StatusGroup>
          <Toggle label="隔离对象" width="w-9">
            <Svg>
              <path d="M3 2h8v8h-8zM10 16L14 23H6z" />
              <circle cx="19" cy="12" r="4" />
            </Svg>
          </Toggle>
        </StatusGroup>
        <StatusGroup>
          <Toggle label="全屏显示" width="w-9">
            <Svg>
              <path d="M1 4H23V20H1z" />
              <path d="M14 7H20V13zM4 12V18H10z" fill={L} stroke="none" />
            </Svg>
          </Toggle>
          <Toggle label="自定义">
            <Svg>
              <path d="M1 4H23M1 12H23M1 20H23" strokeWidth={3} />
            </Svg>
          </Toggle>
        </StatusGroup>
      </div>
    </footer>
  );
}

/* Windows taskbar */

function TaskSvg({ children }: { children: ReactNode }) {
  return (
    <svg width="34" height="34" viewBox="0 0 34 34" fill="none" aria-hidden="true">
      {children}
    </svg>
  );
}

const apps: { name: string; icon: ReactNode; state?: "open" | "active" }[] = [
  {
    name: "任务视图",
    icon: (
      <TaskSvg>
        <path d="M1 10H26V33H1z" fill="#262626" />
        <path d="M10 2H34V24H10z" fill="#fff" />
        <path d="M10 10H26V24H10z" fill="#a9a9a9" />
      </TaskSvg>
    ),
  },
  {
    name: "控制面板",
    icon: (
      <TaskSvg>
        <rect x="1" y="4" width="32" height="26" rx="2" fill="#2397d4" />
        <rect x="3" y="6" width="28" height="22" fill="#b9eafc" />
        <circle cx="11" cy="15" r="7" fill="#1b83cf" />
        <path d="M11 15V8A7 7 0 0 1 18 15z" fill="#f7941d" />
        <path d="M20 18V10H24M24 9h5v4h-5zM24 16h5v4h-5z" stroke="#1468a8" strokeWidth="2" />
        <path d="M5 25H17" stroke="#f7941d" strokeWidth="2" />
        <path d="M19 25H29" stroke="#1b83cf" strokeWidth="2" />
      </TaskSvg>
    ),
  },
  {
    name: "文件资源管理器",
    icon: (
      <TaskSvg>
        <path d="M1 5Q1 3 3 3H12L15 6H31V14H1z" fill="#d99a12" />
        <path d="M1 9H12L15 6H33V32H1z" fill="#fcc936" />
        <path d="M6 32V26Q6 23 9 23H25Q28 23 28 26V32z" fill="#1272c4" />
        <path d="M11 28H23" stroke="#0a4f91" strokeWidth="2" />
      </TaskSvg>
    ),
  },
  {
    name: "Microsoft",
    icon: (
      <TaskSvg>
        <path d="M1 1h16v15h-16z" fill="#76b300" />
        <path d="M18 1h15v15h-15z" fill="#ff5a00" />
        <path d="M1 18h16v15h-16z" fill="#b13ff5" />
        <path d="M18 18h15v15h-15z" fill="#fb2226" />
      </TaskSvg>
    ),
  },
  {
    name: "Navicat",
    icon: (
      <TaskSvg>
        <path d="M2 19C2 10 7 2 14 2C19 4 17 12 13 14C9 15 8 17 7 20" stroke="#4a82ec" strokeWidth="3" />
        <path d="M21 13C19 5 23 2 26 3C31 7 33 13 33 19C31 17 28 16 27 14" stroke="#f0a925" strokeWidth="3" />
        <path d="M9 18C3 24 7 33 17 33C28 33 32 24 26 18C24 16 11 16 9 18z" stroke="#4fbf5c" strokeWidth="3" />
      </TaskSvg>
    ),
  },
  {
    name: "Edge",
    state: "open",
    icon: (
      <TaskSvg>
        <circle cx="17" cy="17" r="16" fill="#1578c8" />
        <path d="M1 16A16 16 0 0 1 33 15Q33 22 25 23Q19 22 21 18Q22 9 13 9Q5 9 1 16z" fill="#2fc0cc" />
        <path d="M20 2A16 16 0 0 1 33 15Q33 22 25 23Q20 22 21 18Q25 12 20 2z" fill="#54d68b" />
        <path d="M12 16Q11 26 21 28Q27 28 31 24Q26 34 16 33Q8 29 9 21z" fill="#0c4f99" />
        <path d="M12 17Q15 12 20 14Q22 17 20 20Q22 25 31 23L30 25Q26 29 19 27Q12 24 12 17z" fill="#f2e3d2" />
      </TaskSvg>
    ),
  },
  {
    name: "联想电脑管家",
    icon: (
      <TaskSvg>
        <path d="M17 1L32 6V18Q31 27 17 33Q3 27 2 18V6z" fill="#1f7df2" />
        <path d="M17 1L2 6V18Q3 27 17 33z" fill="#0b5ed8" />
        <path d="M13 8H19V20H26V26H15Q12 25 12 22z" fill="#fff" />
      </TaskSvg>
    ),
  },
  {
    name: "Visual Studio 2019",
    icon: (
      <TaskSvg>
        <path d="M1 10L6 8L27 25V33L24 33L6 20L1 24z" fill="#7b3fb5" />
        <path d="M1 24L6 26L27 9L24 1L6 14z" fill="#9d5ad8" />
        <path d="M24 1L33 5V29L24 33z" fill="#b98af0" />
        <path d="M1 10L5 13V21L1 24z" fill="#5c2a92" />
      </TaskSvg>
    ),
  },
  {
    name: "Visual Studio 2022",
    icon: (
      <TaskSvg>
        <path d="M1 10L6 8L27 25L24 33L6 20L1 24z" fill="#8d6fb5" />
        <path d="M1 24L6 26L27 9L24 1L6 14z" fill="#6c4c96" />
        <path d="M24 1L33 5V29L24 33z" fill="#c79df7" />
        <path d="M13 3L18 6L27 25V33L13 14z" fill="#9b78c6" />
      </TaskSvg>
    ),
  },
  {
    name: "QC",
    icon: (
      <TaskSvg>
        <path d="M2 11L6 6H32V24L28 28H2z" fill="#35b84b" />
        <path d="M2 11L6 6H32L28 11z" fill="#52d264" />
        <text x="16" y="23" fontSize="14" fontWeight="700" fontFamily="Liberation Sans, sans-serif" fill="#fff" textAnchor="middle">
          QC
        </text>
      </TaskSvg>
    ),
  },
  {
    name: "Everything",
    icon: (
      <TaskSvg>
        <path d="M15 15L22 16L33 29L29 33L18 21z" fill="#e2a26e" stroke="#c06a2c" strokeWidth="2" />
        <circle cx="11" cy="10" r="9" fill="#d9d9d9" stroke="#c06a2c" strokeWidth="2" />
      </TaskSvg>
    ),
  },
  {
    name: "生成工具",
    icon: (
      <TaskSvg>
        <path d="M15 7L20 18" stroke="#8a8a8a" strokeWidth="3" />
        <path d="M4 9L8 3Q15 0 21 2L19 7L12 7L8 12z" fill="#2a2a2a" />
        <path d="M19 16L27 32" stroke="#b8104f" strokeWidth="5" strokeLinecap="round" />
      </TaskSvg>
    ),
  },
  {
    name: "投屏",
    icon: (
      <TaskSvg>
        <rect x="3" y="6" width="28" height="18" rx="2" stroke="#f2633c" strokeWidth="2" />
        <path d="M10 29H24" stroke="#f8c21c" strokeWidth="3" />
      </TaskSvg>
    ),
  },
  {
    name: "MobaXterm",
    icon: (
      <TaskSvg>
        <path d="M1 2H32V26H1z" fill="#2b2d33" stroke="#b8bcc4" />
        <path d="M4 6L8 9L4 12M10 12H13" stroke="#fff" strokeWidth="2" />
        <path d="M9 19L15 13L22 20L15 28z" fill="#f0504e" />
        <path d="M18 16L24 10L32 17L25 23z" fill="#4a8df0" />
        <path d="M15 28L22 20L28 20L32 23L23 33z" fill="#b7e024" />
      </TaskSvg>
    ),
  },
  {
    name: "AutoCAD",
    state: "active",
    icon: (
      <svg width="26" height="30" viewBox="0 0 24 26" aria-hidden="true">
        <path d="M9 1H15L23 24L17 25L14 19L8 20L6 25H1z" fill="#b51f25" />
        <path d="M12 7L15 15L9 16z" fill="#fbe9e4" />
        <path d="M12 1H15L23 24L17 25L12 8z" fill="#d4373b" />
      </svg>
    ),
  },
];

function Taskbar() {
  return (
    <div className="relative flex h-[67px] items-center bg-linear-to-r from-[#ead9c6] via-[#f3e4d4] to-[#eadcc3] text-[#222]">
      <div className="flex-1 pl-7" />
      <button className="flex h-[54px] w-12 items-center justify-center" aria-label="开始">
        <svg width="34" height="34" viewBox="0 0 34 34" aria-hidden="true">
          <defs>
            <linearGradient id="win" x1="0" y1="0" x2="1" y2="1">
              <stop offset="0" stopColor="#4fd0fb" />
              <stop offset="1" stopColor="#0670cf" />
            </linearGradient>
          </defs>
          <path d="M1 1h15v15h-15zM18 1h15v15h-15zM1 18h15v15h-15zM18 18h15v15h-15z" fill="url(#win)" />
        </svg>
      </button>
      <label className="ml-3 flex h-11 w-[311px] items-center gap-3.5 rounded-full border border-[#d9cfc6] bg-[#faf6f1] pl-4">
        <svg width="22" height="22" viewBox="0 0 22 22" fill="none" stroke="#222" strokeWidth="2" aria-hidden="true">
          <circle cx="13" cy="9" r="8" />
          <path d="M7 15L1 21" strokeWidth="3" />
        </svg>
        <input placeholder="搜索" className="min-w-0 flex-1 bg-transparent text-[20px] placeholder:text-[#555]" />
      </label>
      <div className="ml-2 flex w-[931px] justify-between">
        {apps.map((app) => (
          <button
            key={app.name}
            aria-label={app.name}
            className={`relative flex h-[54px] w-[54px] items-center justify-center rounded-md ${
              app.state === "active" ? "bg-[#faf1ea]" : ""
            }`}
          >
            {app.icon}
            {app.state === "open" && <span className="absolute bottom-0 h-1 w-2 rounded-full bg-[#8c8178]" />}
            {app.state === "active" && <span className="absolute bottom-0 h-1 w-6 rounded-full bg-[#118a12]" />}
          </button>
        ))}
      </div>
      <div className="flex flex-1 items-center justify-end pr-7">
        <button aria-label="显示隐藏的图标">
          <svg width="20" height="12" viewBox="0 0 20 12" fill="none" stroke="#222" strokeWidth="2" aria-hidden="true">
            <path d="M1 11L10 2L19 11" />
          </svg>
        </button>
        <span className="mx-5 text-[20px] leading-6">中</span>
        <button className="flex items-center gap-2.5 pl-1" aria-label="网络、音量、电池">
          <svg width="24" height="20" viewBox="0 0 24 20" fill="none" stroke="#222" strokeWidth="2" aria-hidden="true">
            <path d="M1 7Q12 -3 23 7M4 11Q12 3 20 11M8 14Q12 10 16 14" />
            <circle cx="12" cy="17" r="2" fill="#222" stroke="none" />
          </svg>
          <svg width="22" height="20" viewBox="0 0 22 20" fill="none" stroke="#222" strokeWidth="2" aria-hidden="true">
            <path d="M1 7H5L10 2V18L5 13H1z" />
            <path d="M13 6Q16 10 13 14M16 3Q21 10 16 17" />
          </svg>
          <svg width="24" height="20" viewBox="0 0 24 20" fill="none" stroke="#222" strokeWidth="2" aria-hidden="true">
            <path d="M2 3V6H8V3M3 3V0M7 3V0M5 6V14" />
            <rect x="8" y="6" width="13" height="11" rx="2" fill="#222" />
            <path d="M23 9V14" />
          </svg>
        </button>
        <div className="mb-1 ml-5 text-right text-[15px] leading-5">
          <div>16:08</div>
          <div>2023/11/11</div>
        </div>
        <span className="ml-3 flex size-[22px] items-center justify-center rounded-full bg-[#118a12] text-[14px] leading-none text-white">
          1
        </span>
      </div>
      <span className="absolute right-3 bottom-0 text-[13px] leading-[14px] text-[#a39c94]">CSDN @我啥都会</span>
    </div>
  );
}

export default function App() {
  return (
    <div className="flex min-h-screen flex-col bg-[#222831] font-['Noto_Sans','Noto_Sans_CJK_SC',sans-serif]">
      <TitleBar />
      <MenuBar />
      <RibbonTabs />
      <Ribbon />
      <DrawingTabs />
      <div className="h-[7px] border-y-[3px] border-[#3d4556] bg-[#191e2b]" />
      <Canvas />
      <StatusBar />
      <Taskbar />
    </div>
  );
}
